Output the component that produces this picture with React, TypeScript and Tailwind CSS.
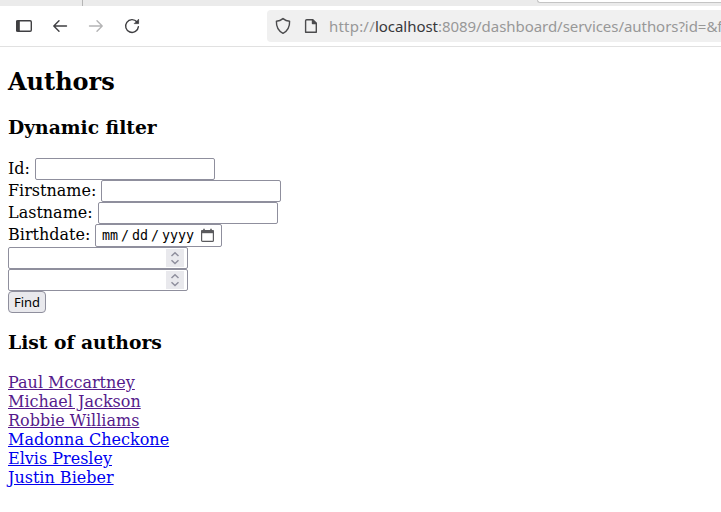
import React from "react";

const box = "border border-[#8f8f9d] rounded-[2px] bg-white box-border shrink-0";

function Spinner() {
  return (
    <div className="flex h-[18px] w-[18px] items-center justify-center bg-[#e9e9ed]">
      <svg width="18" height="18" viewBox="0 0 18 18" fill="none" stroke="#8f8f9d" strokeWidth="1.5">
        <path d="M5.5 7 9 3.8l3.5 3.2M5.5 11.3 9 14.5l3.5-3.2" />
      </svg>
    </div>
  );
}

function Field({ label, gap }: { label: string; gap: string }) {
  return (
    <label className="flex h-[22px]">
      <span className={`${gap} shrink-0 leading-[21px]`}>{label}</span>
      <input className={`${box} h-[22px] w-[180px]`} />
    </label>
  );
}

function NumberField() {
  return (
    <div className={`${box} flex h-[22px] w-[180px] items-center justify-end pr-[3px]`}>
      <Spinner />
    </div>
  );
}

const authors = [
  { name: "Paul Mccartney", visited: true },
  { name: "Michael Jackson", visited: true },
  { name: "Robbie Williams", visited: true },
  { name: "Madonna Checkone", visited: false },
  { name: "Elvis Presley", visited: false },
  { name: "Justin Bieber", visited: false },
];

function Toolbar() {
  return (
    <header>
      <div className="flex h-[6px] bg-[#ebebeb]">
        <div className="w-[83px] border-r border-[#b5b5b5]" />
        <div className="ml-[454px] h-[3px] flex-1 rounded-bl-[4px] border-b border-l border-[#c4c4c4] bg-white" />
      </div>
      <div className="flex h-[41px] items-start border-b border-[#e1e1e1] bg-white">
        <svg className="shrink-0" width="267" height="40" viewBox="0 6 267 40" fill="none" stroke="#3f3f42" strokeWidth="1.4" strokeLinecap="round" strokeLinejoin="round">
          <rect x="16.7" y="20.7" width="14.6" height="10.6" rx="1.2" />
          <path d="M16.7 21.2h2.4v9.6h-2.4z" fill="#3f3f42" />
          <path d="M66.5 26H54M59 20.8 53.8 26l5.2 5.2" />
          <path stroke="#b4b4b5" d="M89.5 26H102M97 20.8l5.2 5.2-5.2 5.2" />
          <path d="M137 22a6.4 6.4 0 1 0 1.4 4.6" />
          <path d="M138.6 19.6v4h-4z" fill="#3f3f42" strokeWidth="0.8" />
        </svg>
        <div className="mt-1 flex h-8 min-w-0 flex-1 items-center overflow-hidden rounded-l-[4px] bg-[#f0f0f0]">
          <svg className="shrink-0" width="62" height="32" viewBox="267 10 62 32" fill="none" stroke="#4b4b4d" strokeWidth="1.4" strokeLinejoin="round">
            <path d="M283 18.6c2 1.7 4.2 2.5 6.6 2.6.2 5.2-1.6 9.5-6.6 12.1-5-2.6-6.8-6.9-6.6-12.1 2.4-.1 4.6-.9 6.6-2.6z" />
            <path d="M306.7 19.7h6l3.6 3.6v9h-10.7V20.7q0-1 1.1-1z" />
            <path d="M312.5 19.7v3.8h3.8z" fill="#4b4b4d" />
          </svg>
          <div className="whitespace-nowrap font-['Noto_Sans'] text-[15px] leading-8 text-[#989898]">
            <span className="inline-block w-[46px] tracking-[0.2px]">http://</span>
            <span className="inline-block w-[63px] tracking-[-0.05px] text-[#38383b]">localhost</span>
            <span className="tracking-[-0.05px]">:8089/dashboard/services/authors?id=&amp;f</span>
          </div>
        </div>
      </div>
    </header>
  );
}

export default function App() {
  return (
    <div className="h-[512px] w-[721px] overflow-hidden bg-white font-['DejaVu_Serif',serif] text-[16px] text-black">
      <Toolbar />
      <main className="px-2 pt-[21px]">
        <h1 className="h-[28px] text-[24px] font-bold leading-[28px]">Authors</h1>
        <h3 className="mt-[20px] h-[22px] text-[18.72px] font-bold leading-[22px]">Dynamic filter</h3>
        <form className="mt-[20px] flex flex-col items-start">
          <Field label="Id:" gap="w-[27px]" />
          <Field label="Firstname:" gap="w-[93px]" />
          <Field label="Lastname:" gap="w-[90px]" />
          <div className="flex h-[23px]">
            <span className="w-[87px] shrink-0 leading-[21px]">Birthdate:</span>
            <div className={`${box} flex h-[23px] w-[127px] items-center pl-[6px] font-['DejaVu_Sans_Mono',monospace] text-[13.333px] leading-[21px]`}>
              <span className="w-[19px]">mm</span>
              <span className="w-[11px]">/</span>
              <span className="w-[19px]">dd</span>
              <span className="w-[11px]">/</span>
              <span className="w-[38px]">yyyy</span>
              <svg width="15" height="15" viewBox="0 0 15 15" fill="none" stroke="#5b5b5e" strokeWidth="1.2">
                <rect x="1.6" y="2.6" width="11.8" height="10.8" rx="1" />
                <path d="M1.2 3.7h12.6" strokeWidth="3" />
                <path d="M4 .8v2M11 .8v2" strokeWidth="1.6" />
              </svg>
            </div>
          </div>
          <NumberField />
          <NumberField />
          <button type="button" className="h-[22px] w-[38px] rounded-[4px] border border-[#8f8f9d] bg-[#e9e9ed] text-center font-['Noto_Sans'] text-[13px] leading-[20px]">Find</button>
        </form>
        <h3 className="mt-[18px] h-[22px] text-[18.72px] font-bold leading-[22px]">List of authors</h3>
        <div className="mt-[20px] flex flex-col items-start">
          {authors.map((a) => (
            <a key={a.name} href="#" className={`h-[19px] leading-[19px] underline ${a.visited ? "text-[#551a8b]" : "text-[#0000ee]"}`}>{a.name}</a>
          ))}
        </div>
      </main>
    </div>
  );
}
